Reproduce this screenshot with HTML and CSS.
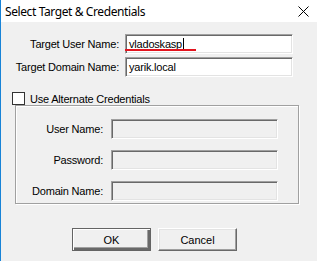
FILE: index.html
```html
<!DOCTYPE html>
<html lang="en">

<head>
    <meta charset="UTF-8">
    <meta name="viewport" content="width=device-width, initial-scale=1.0">
    <title>Select Target &amp; Credentials</title>
    <link rel="stylesheet" href="styles.css">
</head>

<body>
    <div class="window">
        <div class="titlebar">
            <span class="title">Select Target &amp; Credentials</span>
            <svg class="close" width="11" height="11" viewBox="0 0 11 11">
                <path d="M0.5 0.5 L10.5 10.5 M10.5 0.5 L0.5 10.5" stroke="#000" stroke-width="1" fill="none"/>
            </svg>
        </div>

        <div class="content">
            <div class="target-form">
                <label class="label">Target User Name:</label>
                <div class="field">
                    <span class="value">vladoskasp</span><span class="caret"></span>
                    <!-- red mark drawn over the user name -->
                    <span class="underline"></span>
                </div>

                <label class="label">Target Domain Name:</label>
                <div class="field">
                    <span class="value">yarik.local</span>
                </div>
            </div>

            <div class="check-row">
                <span class="checkbox"></span>
                <span class="check-label">Use Alternate Credentials</span>
            </div>

            <div class="group">
                <div class="group-form">
                    <label class="label">User Name:</label>
                    <div class="field disabled"></div>

                    <label class="label">Password:</label>
                    <div class="field disabled"></div>

                    <label class="label">Domain Name:</label>
                    <div class="field disabled"></div>
                </div>
            </div>

            <div class="buttons">
                <button class="button default-button">OK</button>
                <button class="button">Cancel</button>
            </div>
        </div>
    </div>
</body>

</html>
```

FILE: styles.css
```css
body {
    margin: 0;
    padding: 0;
    font-family: "Liberation Sans", Arial, sans-serif;
    font-size: 11px;
    letter-spacing: -0.2px;
    color: #000;
}

.window {
    width: 316px;
    height: 261px;
    background-color: #f0f0f0;
    border-left: 1px solid #1883d7;
    overflow: hidden;
}

.titlebar {
    height: 22px;
    background-color: #fff;
    display: flex;
    align-items: center;
    justify-content: space-between;
    padding: 0 8px 0 4px;
}

.title {
    font-family: "Noto Sans", "Open Sans", sans-serif;
    font-size: 12px;
    letter-spacing: -0.4px;
}

.close {
    margin-top: 1px;
}

.content {
    padding-top: 12px;
}

.target-form {
    display: grid;
    grid-template-columns: 118px 168px;
    grid-auto-rows: 20px;
    column-gap: 6px;
    row-gap: 3px;
}

.label {
    text-align: right;
    align-self: center;
    white-space: nowrap;
}

.field {
    position: relative;
    display: flex;
    align-items: center;
    box-sizing: border-box;
    height: 20px;
    padding-left: 1px;
    background-color: #fff;
    border: 1px solid;
    border-color: #a0a0a0 #fff #fff #a0a0a0;
    box-shadow: inset 1px 1px #696969, inset -1px -1px #e3e3e3;
}

.field .value {
    padding-left: 2px;
}

.field.disabled {
    background-color: #f0f0f0;
}

.caret {
    width: 1px;
    height: 13px;
    background-color: #000;
    margin-left: 1px;
}

.underline {
    position: absolute;
    left: -1px;
    top: 14px;
    width: 71px;
    height: 2px;
    background-color: #e3141e;
}

.check-row {
    display: flex;
    align-items: center;
    gap: 5px;
    margin-top: 15px;
    padding-left: 11px;
    height: 13px;
}

.checkbox {
    box-sizing: border-box;
    width: 13px;
    height: 13px;
    background-color: #fff;
    border: 1px solid #333;
}

.group {
    box-sizing: border-box;
    width: 284px;
    height: 99px;
    margin-left: 14px;
    border: 1px solid #a0a0a0;
    box-shadow: inset 1px 1px #fff, 1px 1px #fff;
    padding-top: 13px;
}

.group-form {
    display: grid;
    grid-template-columns: 87px 167px;
    grid-auto-rows: 20px;
    column-gap: 8px;
    row-gap: 11px;
}

.buttons {
    display: flex;
    gap: 7px;
    margin-top: 24px;
    padding-left: 71px;
}

.button {
    box-sizing: border-box;
    width: 79px;
    height: 23px;
    font-family: "Liberation Sans", Arial, sans-serif;
    font-size: 11px;
    color: #000;
    background-color: #f0f0f0;
    border: 1px solid;
    border-color: #fff #696969 #696969 #fff;
    box-shadow: inset -1px -1px #a0a0a0, inset 1px 1px #e3e3e3;
    padding: 0;
}

.default-button {
    border: 1px solid #646464;
    box-shadow: inset 1px 1px #fff, inset -2px -2px #696969, inset -3px -3px #a0a0a0;
}
```
